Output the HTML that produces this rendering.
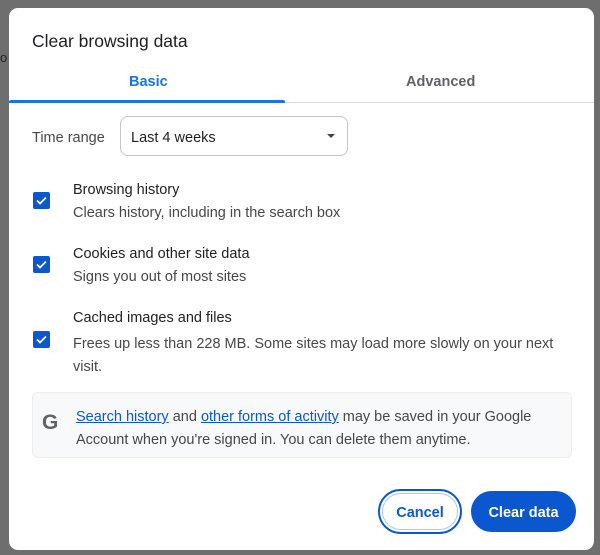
<!DOCTYPE html><html><head><style>
body{margin:0;width:600px;height:555px;background:#6e6e6e;font-family:"Liberation Sans",sans-serif;position:relative;overflow:hidden}
.d{position:absolute;left:9px;top:8px;width:585px;height:542px;background:#fff;border-radius:9px}
.a{position:absolute;white-space:nowrap}
.cb{position:absolute;left:24px;width:17px;height:17px;background:#0b57d0;border-radius:2px}
.t1{font-size:14.5px;color:#202124}.t2{font-size:14.5px;color:#474747}
a{color:#0b57d0;text-decoration:underline}
</style></head><body>
<div class="a" style="left:0;top:50px;font-size:13px;color:#222">o</div>
<div class="d">
<div class="a" style="left:23px;top:23px;font-size:17.5px;color:#202124">Clear browsing data</div>
<div class="a" style="left:120px;top:66px;font-size:14.5px;color:#1a73e8;font-weight:bold">Basic</div>
<div class="a" style="left:397px;top:66px;font-size:14.5px;color:#5f6368;font-weight:bold">Advanced</div>
<div class="a" style="left:0;top:94px;width:585px;height:1px;background:#dadce0"></div>
<div class="a" style="left:0;top:92px;width:276px;height:3px;background:#1a73e8;border-radius:2px 2px 0 0"></div>
<div class="a t2" style="left:23px;top:122px">Time range</div>
<div class="a" style="left:111px;top:108px;width:226px;height:38px;border:1px solid #c4c7c5;border-radius:8px"></div>
<div class="a t1" style="left:122px;top:122px">Last 4 weeks</div>
<div class="a" style="left:318px;top:126px;width:0;height:0;border-left:4px solid transparent;border-right:4px solid transparent;border-top:4px solid #444"></div>
<div class="cb" style="top:184px"><svg width="17" height="17"><path d="M4 8.5l3 3 6-6" stroke="#fff" stroke-width="1.8" fill="none"/></svg></div>
<div class="a t1" style="left:64px;top:174px">Browsing history</div>
<div class="a t2" style="left:64px;top:197px">Clears history, including in the search box</div>
<div class="cb" style="top:248px"><svg width="17" height="17"><path d="M4 8.5l3 3 6-6" stroke="#fff" stroke-width="1.8" fill="none"/></svg></div>
<div class="a t1" style="left:64px;top:238px">Cookies and other site data</div>
<div class="a t2" style="left:64px;top:261px">Signs you out of most sites</div>
<div class="cb" style="top:323px"><svg width="17" height="17"><path d="M4 8.5l3 3 6-6" stroke="#fff" stroke-width="1.8" fill="none"/></svg></div>
<div class="a t1" style="left:64px;top:302px">Cached images and files</div>
<div class="a t2" style="left:64px;top:325px;line-height:23px;white-space:normal;width:500px">Frees up less than 228 MB. Some sites may load more slowly on your next visit.</div>
<div class="a" style="left:23px;top:384px;width:538px;height:64px;background:#f8f9fa;border:1px solid #eceef0;border-radius:6px"></div>
<div class="a" style="left:33px;top:403px;font-size:21px;font-weight:bold;color:#5f6368">G</div>
<div class="a t2" style="left:67px;top:398px;line-height:23px">
<a>Search history</a> and <a>other forms of activity</a> may be saved in your Google<br>Account when you're signed in. You can delete them anytime.</div>
<div class="a" style="left:369px;top:481px;width:80px;height:41px;border:2px solid #0b57d0;border-radius:24px;box-shadow:inset 0 0 0 2px #fff,inset 0 0 0 3px #a8c7fa;color:#0b57d0;font-size:14.5px;font-weight:bold;text-align:center;line-height:45px">Cancel</div>
<div class="a" style="left:462px;top:483px;width:105px;height:41px;background:#0b57d0;border-radius:21px;color:#fff;font-size:14.5px;font-weight:bold;text-align:center;line-height:44px">Clear data</div>
</div>
</body></html>
